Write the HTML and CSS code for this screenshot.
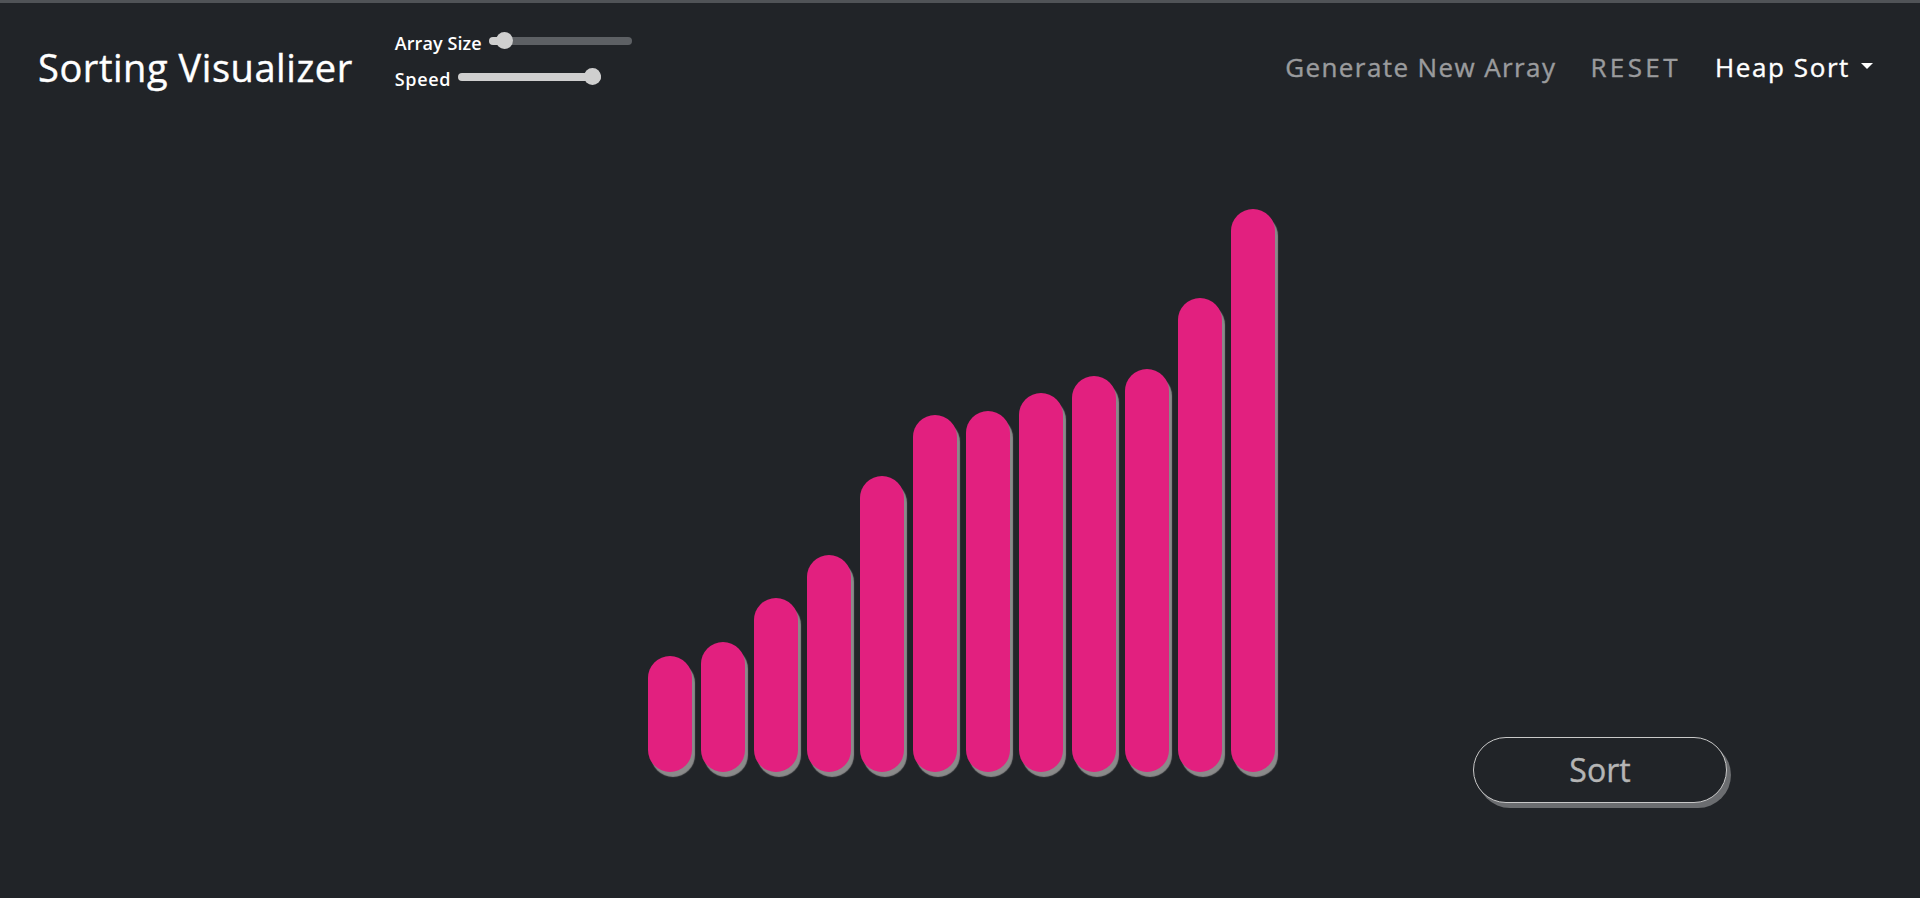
FILE: index.html
```html
<!DOCTYPE html>
<html lang="en">
<head>
<meta charset="utf-8">
<title>Sorting Visualizer</title>
<link rel="stylesheet" href="styles.css">
</head>
<body>
<header class="navbar">
  <div class="brand">Sorting Visualizer</div>
  <div class="controls">
    <label class="control">
      <span class="control-label">Array Size</span>
      <input class="range range--size" type="range" min="0" max="100" value="6">
    </label>
    <label class="control">
      <span class="control-label control-label--wide">Speed</span>
      <input class="range range--speed" type="range" min="0" max="100" value="100">
    </label>
  </div>
  <nav class="nav">
    <a class="nav-link">Generate New Array</a>
    <a class="nav-link nav-link--caps">RESET</a>
    <a class="nav-link nav-link--active dropdown-toggle">Heap Sort</a>
  </nav>
</header>
<main class="stage">
  <div class="spacer"></div>
  <div class="bars">
    <div class="bar" style="height:116px"></div>
    <div class="bar" style="height:130px"></div>
    <div class="bar" style="height:174px"></div>
    <div class="bar" style="height:217px"></div>
    <div class="bar" style="height:296px"></div>
    <div class="bar" style="height:357px"></div>
    <div class="bar" style="height:361px"></div>
    <div class="bar" style="height:379px"></div>
    <div class="bar" style="height:396px"></div>
    <div class="bar" style="height:403px"></div>
    <div class="bar" style="height:474px"></div>
    <div class="bar" style="height:563px"></div>
  </div>
  <div class="actions">
    <button class="sort-btn" type="button">Sort</button>
  </div>
</main>
</body>
</html>
```
FILE: styles.css
```css
* { box-sizing: border-box; }

html, body {
  margin: 0;
  padding: 0;
}

body {
  height: 100vh;
  overflow: hidden;
  background: #212428;
  border-top: 3px solid #505357;
  font-family: "Open Sans", "Liberation Sans", sans-serif;
  color: #fff;
  display: flex;
  flex-direction: column;
}

.navbar {
  height: 128px;
  flex: none;
  display: flex;
  align-items: center;
  padding: 0 47px 0 38px;
}

.brand {
  font-size: 38px;
  font-weight: 400;
  letter-spacing: 0.55px;
  line-height: 1;
  color: #fff;
  -webkit-text-stroke: 0.4px #fff;
}

.controls {
  margin-left: 42px;
  margin-top: -12px;
  display: flex;
  flex-direction: column;
  gap: 12px;
}

.control {
  display: flex;
  align-items: center;
  gap: 7px;
}

.control-label {
  font-size: 18px;
  font-weight: 600;
  line-height: 24px;
  letter-spacing: 0.1px;
  color: #fff;
}

.control-label--wide {
  letter-spacing: 0.7px;
}

.range {
  -webkit-appearance: none;
  appearance: none;
  width: 143px;
  height: 17px;
  margin: 0 0 5px 0;
  padding: 0;
  background: transparent;
}

.range::-webkit-slider-runnable-track {
  height: 8px;
  border-radius: 4px;
  background: #cfcfcf;
}

.range--size::-webkit-slider-runnable-track {
  background: linear-gradient(90deg, #cfcfcf 0 16px, #5d6064 16px);
}

.range::-webkit-slider-thumb {
  -webkit-appearance: none;
  appearance: none;
  width: 17px;
  height: 17px;
  margin-top: -4.5px;
  border: none;
  border-radius: 50%;
  background: #cfcfcf;
}

.nav {
  margin-left: auto;
  display: flex;
  align-items: center;
  gap: 34px;
}

.nav-link {
  font-size: 26px;
  font-weight: 400;
  letter-spacing: 1.4px;
  line-height: 1;
  color: #9a9b9d;
  -webkit-text-stroke: 0.4px #9a9b9d;
  cursor: pointer;
}

.nav-link--caps {
  letter-spacing: 3.4px;
}

.nav-link--active {
  color: #fff;
  -webkit-text-stroke: 0.4px #fff;
  letter-spacing: 1.6px;
}

.dropdown-toggle {
  display: flex;
  align-items: center;
}

.dropdown-toggle::after {
  content: "";
  display: block;
  margin-left: 11px;
  margin-top: -2px;
  border-top: 6px solid #fff;
  border-left: 6.5px solid transparent;
  border-right: 6.5px solid transparent;
}

.stage {
  flex: 1;
  display: grid;
  grid-template-columns: 1fr auto 1fr;
  align-items: end;
  padding-bottom: 95px;
}

.bars {
  display: flex;
  align-items: flex-end;
  gap: 9px;
  margin: 0 0 31px 2px;
}

.bar {
  width: 44px;
  border-radius: 22px;
  background: #e2207f;
  box-shadow: 3px 5px 1px #8a8a8a;
}

.actions {
  display: flex;
  justify-content: flex-end;
  padding-right: 193px;
}

.sort-btn {
  width: 254px;
  height: 66px;
  border: 1px solid #c9c9c9;
  border-radius: 33px;
  background: #212428;
  box-shadow: 4px 5px 0 #6b6d70;
  color: #b5b5b5;
  font-family: inherit;
  font-size: 32px;
  font-weight: 400;
  -webkit-text-stroke: 0.4px #b5b5b5;
  line-height: 1;
  padding: 0;
  cursor: pointer;
}
```
